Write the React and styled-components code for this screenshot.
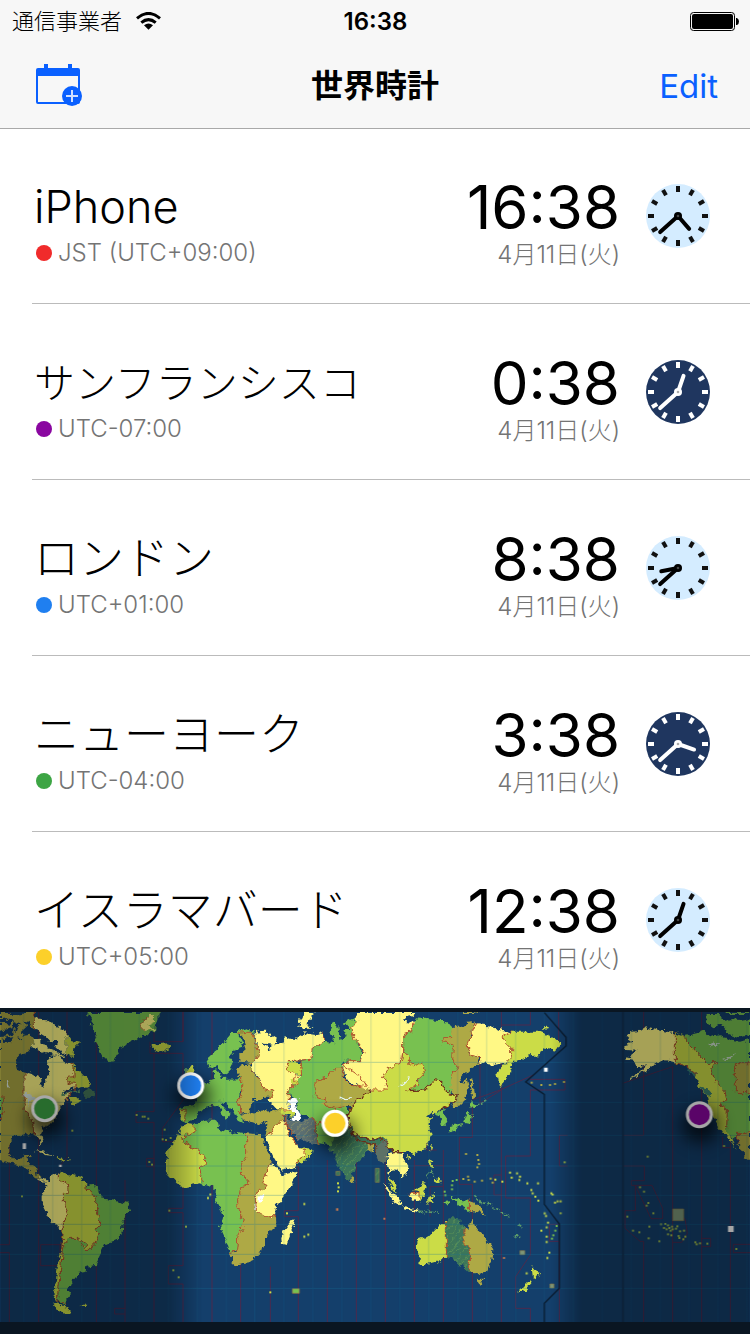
import React from "react";
import styled, { createGlobalStyle } from "styled-components";

const cities = [
  { name: "iPhone", zone: "JST (UTC+09:00)", time: "16:38", dot: "#f02b2b", day: true },
  { name: "サンフランシスコ", zone: "UTC-07:00", time: "0:38", dot: "#8a06a0", day: false, compact: true },
  { name: "ロンドン", zone: "UTC+01:00", time: "8:38", dot: "#1f7ff0", day: true },
  { name: "ニューヨーク", zone: "UTC-04:00", time: "3:38", dot: "#3da544", day: false },
  { name: "イスラマバード", zone: "UTC+05:00", time: "12:38", dot: "#fcd02a", day: true },
];

const LIME = "#cbdc47";
const GREEN = "#78c150";
const YELLOW = "#fff885";
const OLIVE = "#aea945";
const SEA = "#143f6b";
const TEAL = "#3d7659";
const SLATE = "#5d7166";

// each sheet is [x offset, [[fill, outline], ...]]
const sheets = [
  [0, [
    [OLIVE, "M0 36H103V88L92 84 86 66 74 62 78 82 62 96 72 108 92 104 104 118 98 140 84 158 62 164 45 182 50 206 72 215V330L88 345 98 365 101 400 62 408 40 410 28 430 28 460 40 478 70 475 78 462 90 462 80 490 105 498 110 525 130 535 105 532 85 510 60 495 35 493 0 480Z"],
    [YELLOW, "M72 215 95 222 120 232 122 255 132 260 137 240 148 215 140 195 150 170 170 165 185 180 200 188 215 190 222 210 222 230 204 234 204 248 225 250 225 262 205 268 185 285 212 280 200 300 180 318 165 355 150 372 125 385 122 400 130 430 124 436 113 405 101 400 98 365 88 345 72 330Z"],
    [YELLOW, "M103 55 140 58 160 75 190 85 200 100V168L190 162 182 148 166 140 172 128 150 122 138 108 122 98 103 92Z"],
    [YELLOW, "M98 140 104 118 122 116 126 132 146 144 168 152 190 168 192 176 172 166 146 162 128 156 112 150Z"],
    [LIME, "M200 104 212 122 238 128 220 145 218 168 200 162Z"],
    [LIME, "M215 190 240 215 268 245 265 258 235 265 225 260 222 250 204 248 202 232 222 230Z"],
    ["#47795b", "M248 290 262 262 285 275 288 292Z"],
    [LIME, "M202 288 222 292 245 302 216 316Z"],
    ["#e3f2e8", "M65 290 80 278 102 288 104 300 92 300 92 325 85 300ZM18 238 26 242 34 264 26 260Z"],
    [GREEN, "M0 288 10 292 10 330 0 362Z"],
    [SEA, "M0 58 22 54 40 66 30 74 0 70ZM0 92 30 82 44 92 34 106 0 112ZM30 36H70L60 46 40 44ZM8 116 36 112 40 122 16 126ZM44 66 58 72 50 96 40 84ZM52 112 70 118 60 124Z"],
    [YELLOW, "M104 452 125 450 162 468 140 466 120 456ZM112 533 130 536 145 545 165 522 174 526 145 556Z"],
    [LIME, "M168 470 196 475 190 482 172 478ZM200 478 212 478 212 481 200 481Z"],
    [YELLOW, "M170 520 150 530 145 550 125 585 125 612 150 660 188 692 190 660 205 640 190 610 190 580 205 575 202 550 175 542Z"],
    [LIME, "M172 520 185 515 215 525 245 530 262 550 258 565 275 578 290 600 290 640 300 645 298 675 288 690 298 700 275 748 255 748 262 738 232 715 208 715 188 740 178 850 170 910 162 890 170 820 185 740 190 692 190 660 205 640 190 610 190 580 205 575 202 550 175 542Z"],
    [GREEN, "M258 555 275 552 300 572 302 595 345 602 385 612 390 632 368 665 365 700 350 720 315 735 300 765 285 795 262 800 260 815 232 820 230 838 215 840 218 855 205 865 210 885 198 900 195 915 172 908 178 850 188 740 208 715 232 715 262 738 255 748 275 748 298 700 288 690 298 675 300 645 290 640 290 600 275 578 258 565Z"],
    [LIME, "M164 912 195 918 210 940 190 942 165 925ZM162 870 168 874 166 896 160 890ZM242 914 256 914 254 918 244 918Z"],
    [GREEN, "M262 36H480L465 90 430 108 400 120 370 135 350 165 335 188 310 175 295 145 283 125 290 105 275 80 278 60Z"],
    [YELLOW, "M424 94 426 66 442 48 466 48 450 56 466 66 448 74 466 88Z"],
    [LIME, "M453 134 505 130 512 145 485 157 460 150Z"],
  ]],
  [450, [
    [LIME, "M92 380 110 372 135 375 132 392 92 418 150 455 167 478 165 492 148 500 155 530 150 550 98 560 80 550 48 515 45 490 50 455 65 440 80 410Z"],
    [GREEN, "M135 375 165 362 200 362 205 385 240 395 255 405 262 396 287 400V470L272 500 275 520 300 555 275 560 272 580 260 600 262 625 272 628 272 650 280 660 268 685 288 688 265 695 260 750 240 758 228 720 212 685 222 650 210 620 195 600 198 570 185 558 150 552 155 530 148 500 165 492 167 478 150 455 92 418 132 392Z"],
    [OLIVE, "M287 400 330 402 345 430 362 480 355 510 338 540 348 560 318 580 316 600 320 635 345 650 375 650 376 680 345 710 345 730 320 770 295 790 258 796 250 790 240 758 260 755 265 695 288 688 268 685 280 660 272 650 272 628 262 625 260 600 272 580 275 560 300 555 275 520 272 500 287 470Z"],
    [YELLOW, "M362 485 375 500 398 525 440 515 430 545 400 590 375 620 372 650 345 650 320 635 316 600 318 580 348 560 338 540 355 510ZM428 655 433 672 410 735 396 732 394 712 402 690Z"],
    [YELLOW, "M345 412 365 400 375 380 395 360 405 365 410 390 430 420 445 440 465 450 465 465 445 480 440 500 395 512 370 470Z"],
    [LIME, "M450 442 472 438 488 455 470 480 440 490 446 478 465 465 465 450Z"],
    [OLIVE, "M300 345 335 332 380 330 398 335 400 360 375 380 365 400 345 412 350 390 352 365 330 372 300 365Z"],
    [LIME, "M388 330 430 330 428 350 400 345Z"],
    [GREEN, "M520 125 560 130 535 100 550 65 565 75 568 120 590 108 580 90 600 90 582 70 610 56 640 70 620 130 635 150 630 185 580 185 580 205 555 205 530 232 500 238 495 262 500 290 525 300 530 318 560 325 585 320 605 340 605 365 600 400 570 420 555 440 525 432 502 430 498 370 470 345 455 345 440 320 448 300 420 290 415 270 440 250 430 235 455 225 450 182 485 178 490 145Z"],
    [OLIVE, "M495 240 530 232 555 205 580 205 580 235 600 255 645 262 662 270 640 290 610 320 560 325 530 318 515 310 525 300 500 292 496 270Z"],
    [YELLOW, "M315 98 345 95 380 118 375 135 335 130 360 150 366 130 400 130 405 112 430 120 465 100 500 105 520 98 525 120 490 145 485 178 412 182 412 212 455 225 440 250 415 270 415 300 418 332 382 330 355 300 372 275 340 265 325 230 302 210 308 185 325 165Z"],
    [YELLOW, "M497 36 475 60 470 74 488 86 466 86 444 76 455 50 465 36Z"],
    [LIME, "M412 182 450 190 456 222 430 220 412 212ZM420 238 444 236 440 252 428 252Z"],
    [OLIVE, "M268 100 290 97 312 97 325 165 305 188 268 185 268 165 290 145 278 112Z"],
    [OLIVE, "M262 208 285 192 300 192 305 215 325 235 340 265 375 275 368 290 340 290 330 300 310 300 304 322 296 338 272 340 262 300 275 280 275 235 262 228Z"],
    [GREEN, "M172 175 200 150 245 100 285 88 318 95 265 103 280 140 250 150 238 175 250 190 235 220 218 228 205 195 178 203Z"],
    [GREEN, "M165 250 195 240 190 212 202 208 210 237 275 235 278 260 262 300 270 340 280 352 282 370 266 362 248 325 215 302 208 310 242 345 232 362 210 326 190 315 165 320 135 350 110 370 92 362 94 320 135 315 140 290Z"],
    [LIME, "M92 328H105L102 360H92ZM108 205 130 200 130 225 110 225Z"],
    [OLIVE, "M272 345 296 338 302 350 298 368 286 362Z"],
    ["#ffffff", "M415 300 435 292 448 300 438 312 440 325 453 345 445 362 430 358 432 340 420 325ZM326 588 338 584 341 596 330 602 325 598ZM313 612 317 612 322 634 316 628Z"],
  ]],
  [1020, [
    [YELLOW, "M50 36H228L185 62 220 65 215 95 188 105 188 150 180 190 145 205 130 235 140 245 138 270 92 270 60 262 20 240 8 195 30 182 62 182 70 150 45 120 35 80 50 65Z"],
    [GREEN, "M225 55 300 60 330 75 340 85 335 110 308 110 310 128 340 135 338 180 350 200 335 225 332 285 305 260 305 245 280 242 255 270 200 272 230 255 245 225 258 205 248 190 210 195 205 160 188 150 188 105 215 95 220 65Z"],
    [LIME, "M130 235 145 205 180 190 190 152 205 160 210 195 248 190 258 205 235 240 230 255 200 272 255 270 280 242 305 245 305 260 332 285 352 285 345 305 300 330 280 347 275 332 255 350 277 352 262 372 277 400 260 445 225 462 190 455 160 455 145 440 120 412 100 420 70 412 35 400 25 370 25 345 38 310 70 285 92 270 138 270 142 245Z"],
    [OLIVE, "M338 80 365 80 380 68 408 65 398 90 385 110 382 165 410 170 422 190 390 208 365 230 355 245 372 250 380 235 386 260 375 300 355 320 335 322 352 290 330 270 335 225 350 200 338 180 340 135 310 128 308 110 335 110ZM392 238 400 240 405 290 396 296ZM365 36H400L420 42 370 42Z"],
    [YELLOW, "M408 70 440 72 445 82 470 85 510 95 515 120 490 120 515 145 515 170 500 185 465 195 425 190 418 170 385 165 382 130 390 110 395 95Z"],
    [LIME, "M490 108 515 95 560 95 600 95 640 112 664 132 652 150 610 142 600 165 560 170 530 182 510 200 515 215 480 262 472 220 500 185 515 170 515 145 490 120ZM606 82 626 80 626 85 610 86Z"],
    [GREEN, "M293 337 310 330 322 365 310 378 300 360ZM385 335 396 345 392 365 360 378 330 397 326 382 370 372ZM392 303 414 315 405 328 388 325Z"],
    ["url(#hatch)", "M0 395 35 380 40 410 85 430 88 450 50 490 35 535 20 538-5 500-20 460-35 445Z"],
    [TEAL, "M36 402 70 415 105 422 128 410 140 420 135 434 110 440 98 432 60 426Z"],
    [OLIVE, "M82 430 102 432 98 454 86 450ZM34 530 46 542 42 552 35 548Z"],
    [SLATE, "M104 440 135 416 146 442 140 470 130 492 115 485Z"],
    [YELLOW, "M140 470 165 456 188 458 188 475 205 500 200 525 185 532 175 510 155 508 148 530 142 500ZM125 552 150 570 175 590 185 618 165 608ZM187 620 240 630 238 637 190 628ZM205 580 240 580 240 598 220 603Z"],
    [LIME, "M143 530 164 545 174 578 156 566ZM240 575 218 574 232 564 248 546 258 555 252 585 240 605ZM268 480 280 485 278 505 268 500ZM284 535 300 530 302 550 290 548ZM270 440 277 438 272 455ZM200 472 214 470 206 480ZM262 588 288 582 288 588 270 594 282 614 274 612 266 602 262 614Z"],
    [GREEN, "M330 590 362 600 388 602 388 635 365 622 350 608ZM310 605 330 604 330 610 312 610Z"],
    [OLIVE, "M388 602 415 612 420 628 438 645 405 634 388 635Z"],
    [LIME, "M319 668V775L290 785 250 796 238 792 240 770 230 740 235 718 265 708 300 672ZM575 797 590 815 603 820 590 838 578 830ZM572 838 578 845 552 875 538 872Z"],
    ["url(#hatch)", "M319 668 330 655 362 658 360 675 372 682V740H388V818L370 800 350 790 340 778 319 775Z"],
    [OLIVE, "M372 682 388 690 398 650 412 690 435 710 460 745 458 775 438 815 410 820 388 818V740H372ZM410 838 430 836 420 853Z"],
  ]],
  [1620, [
    [YELLOW, "M255 135 282 128 262 112 275 95 300 92 315 82 360 92 406 100V188L375 180 345 190 325 208 290 228 255 243 300 216 322 196 292 202 282 180 258 176 290 152 258 150Z"],
    [LIME, "M406 98 435 108 440 125 460 145 478 165 500 188 528 188 512 210 525 240 555 275 560 300 540 315 562 328 560 385 565 400 590 447 560 410 535 378 510 330 505 290 475 260 470 225 430 192 406 188Z"],
    [GREEN, "M435 108 470 100 490 92 510 112 540 105 570 122 600 125 630 116V470L600 432 592 400 580 420 562 400 560 385 562 328 540 315 560 300 555 275 525 240 512 210 528 188 500 188 478 165 460 145 440 125Z"],
    [GREEN, "M500 45 540 45 552 65 520 82 498 65ZM540 66 575 58 600 60 630 55V105L600 112 565 100ZM540 36H630V42L560 42Z"],
    [OLIVE, "M586 188H630V278H586ZM630 390 615 400 592 400 594 430 615 470 630 480Z"],
    ["#cfe0d0", "M503 132 518 130 524 124 526 132 540 133 524 138 510 142 514 136ZM550 178 566 172 586 164 570 178 558 180Z"],
    ["#3d8270", "M436 200 450 206 472 226 470 234 452 222ZM478 262 500 268 514 284 510 290 490 274Z"],
  ]],
];

const borders = [
  [0, "M103 36V95M72 215V330L88 345 98 365 101 400M215 190 222 210 222 230 202 232 204 248 225 250V262L200 300M0 288 10 292V330L0 362M175 542 202 550 205 575 190 580V610L205 640 190 660V692L185 740M188 740 208 715 232 715 262 738 255 748 275 748 298 700 288 690 298 675 300 645 290 640V600L275 578 258 565V555M188 740 178 850 170 908H195M172 518V535M426 94V66L442 48"],
  [450, "M92 418 132 392V376M92 418 150 455 167 478 165 492 148 500 155 530V550M287 400V470L272 500 275 520 300 555 275 560 272 580 260 600 262 625 272 628V650L280 660 268 685 288 688 265 695 260 750 240 758M362 485 355 510 338 540 348 560 318 580 316 600 320 635 345 650H375M345 412 365 400 375 380 395 360 405 365 410 390 430 420 445 440M450 442 465 450V465L440 490M400 345 410 375 430 400 445 415M262 100 290 97 308 97 325 165 305 188M302 210 325 235 340 265 375 275 355 300M275 235V280L262 300 270 340M520 98 525 120 490 145 485 178 412 182V212L430 220M450 182 455 225 430 235 440 250 415 270V300M495 240 530 232 555 205H580V235L600 255 645 262M495 240 496 290 525 300 530 318 560 325 585 320M475 350 495 365 498 400 505 430M498 370 520 366 560 325M92 328H105V360M388 330H430"],
  [1020, "M50 65 35 80 45 120 70 150 62 182 30 182 8 195 45 222 60 230 92 270H138L140 245 130 235 145 205 180 190 188 150V105L215 95 220 65M188 150 205 160 210 195 248 190 258 205 245 225 230 255 200 272M335 110H308L310 128 340 135 338 180 350 200 335 225M408 70 390 110 382 130 385 165 418 170 425 190M515 95 490 108V120L515 145V170L500 185M319 668V775M372 682V740H388V818M388 602V635M205 580H240V598"],
  [1620, "M406 98V188L430 192 470 225M435 108 440 125 460 145 478 165 500 188H528L512 210 525 240 555 275 560 300 540 315 562 328 560 385M586 188V278H630M586 188H630M630 390 615 400H592V430"],
];

const darkBorders = "M200 272 255 270 280 242 305 245 305 260 332 285 352 285 345 305 300 330M92 270 70 285 38 310 25 345V370L35 400 70 412 100 420 120 412 145 440 160 455H190M36 402 60 426 98 432 110 440 104 460";

const islands = [
  ["#9bb84a", 0, [[217, 392], [410, 345], [428, 350], [434, 350], [445, 356], [494, 389], [488, 418], [498, 420], [512, 414], [448, 486], [456, 494], [508, 632], [558, 680], [520, 811], [536, 832], [66, 589]]],
  [LIME, 450, [[181, 584], [174, 594], [463, 612], [411, 640], [475, 704], [463, 710], [564, 550], [566, 562], [564, 574], [361, 877]]],
  [LIME, 1020, [[510, 518], [515, 533], [531, 520], [540, 530], [538, 540], [562, 550], [594, 550], [574, 570], [578, 580], [586, 590], [595, 602], [634, 580], [638, 584], [645, 608], [653, 604], [662, 604], [614, 640], [618, 648], [624, 668], [604, 692], [620, 682], [620, 710], [620, 726], [628, 758], [622, 774], [560, 820], [487, 545], [466, 539]]],
  [OLIVE, 1020, [[378, 462], [412, 465], [415, 480], [417, 492], [412, 502], [370, 537], [384, 530], [386, 540], [404, 545], [426, 542], [452, 536], [458, 548], [575, 248], [604, 255], [630, 255], [645, 252], [672, 246]]],
  [GREEN, 1020, [[338, 543], [350, 540], [336, 556], [336, 568], [314, 575], [316, 586], [650, 678], [646, 692], [640, 706], [636, 716]]],
  ["#9bb84a", 1620, [[74, 487], [62, 640], [323, 470], [300, 562], [312, 575], [325, 609], [320, 617], [340, 640], [262, 650], [279, 692], [298, 697], [328, 680], [326, 715], [358, 724], [363, 673], [376, 672], [384, 676], [372, 684], [380, 688], [388, 684], [396, 680], [392, 692], [398, 688], [384, 703], [394, 706], [408, 686], [412, 679], [420, 694], [432, 692], [416, 708], [418, 714], [430, 718], [436, 710], [466, 727], [470, 733], [480, 730], [502, 731], [589, 747], [552, 438]]],
];

const zoneLines = [
  "M28 36V734H0M28 966V758H0M116 36V966M201 36V470L181 497M289 36V966M375 540V966M375 925H344V942H375M462 36V125H549V36M549 125M549 160H450V125M462 160V335H408V367H462V966M549 36V125M549 160V300L487 385V425H550M549 425V625H505V638H549V797H505V852H549V966M440 475H462V500H440ZM122 734H180V797H122Z",
  "M636 36V966M722 700V966M811 800V966M853 500H895V632H853V650H895V966M982 480V966M1069 300V966M1156 440V966M1243 480V966M1330 450V966",
  "M1243 540V497H1330M1310 450H1280V370M1417 300 1500 270 1600 225M1417 320V412H1378V553H1417V966M1504 36V966M1330 560H1290V650M1591 36V75H1504M1591 270V468H1517V594H1591V765L1547 830V925H1591V966M1504 270 1440 310V180M1504 525H1482V585H1504M1590 238H1695V270H1590M1676 36V130M1703 406H1678V498H1703M1678 673H1648V724H1678V966",
  "M1931 36V230M1868 250 2018 200V966M1931 230V406H1868M1868 498H1933V542H1894V556H1906V632H1875V685L1920 724H1931V966M1906 556H1956L1988 625V656H1953L1906 556M2018 656H2055L2062 700 2045 727H2018M2105 36V966M2105 715H2132V740H2105M2191 400V966M2191 443H2168V410M2250 733H2200V758H2250",
];

const pins = [
  { x: 134, y: 326, color: "#3da544" },
  { x: 572, y: 257, color: "#1f7ff0" },
  { x: 1005, y: 370, color: "#fcd02a" },
  { x: 2098, y: 344, color: "#8a06a0" },
];

const gridX = Array.from({ length: 26 }, (_, i) => Math.round(71 + i * 86.8));
const gridY = [187, 307, 406, 498, 586, 673, 763, 865];

const CalendarAddIcon = () => (
  <svg width="48" height="44" viewBox="0 0 48 44" aria-hidden="true">
    <path d="M8 0h4v4h20V0h4v4h6a2 2 0 0 1 2 2v32a2 2 0 0 1-2 2H2a2 2 0 0 1-2-2V6a2 2 0 0 1 2-2h6zM2 12v26h40V12z" fill="#0a60ff" fillRule="evenodd" />
    <circle cx="36" cy="32" r="10" fill="#0a60ff" />
    <path d="M36 26v12M30 32h12" stroke="#cfe0ff" strokeWidth="2" />
  </svg>
);

const WifiIcon = () => (
  <svg width="25" height="18" viewBox="0 0 25 18" aria-label="Wi-Fi">
    <path d="M1 6.300Q12.500-3.500 24 6.300M5.300 10.600Q12.500 4.600 19.700 10.600" fill="none" stroke="#000" strokeWidth="3" />
    <path d="M8 13.300Q12.500 9.800 17 13.300L12.500 17.800Z" />
  </svg>
);

const BatteryIcon = () => (
  <svg width="49" height="19" viewBox="0 0 49 19" aria-label="Battery">
    <rect x=".5" y=".5" width="44" height="18" rx="3" fill="none" stroke="#000" />
    <rect x="2" y="2" width="41" height="15" rx="2" />
    <path d="M46 6h1q2 1 2 3.500T47 13h-1z" />
  </svg>
);

const ClockFace = ({ time, day }) => {
  const [hours, minutes] = time.split(":").map(Number);
  const ink = day ? "#111" : "#fff";
  const hand = day ? "#000" : "#fff";
  return (
    <svg width="64" height="64" viewBox="-32 -32 64 64" aria-hidden="true">
      <circle r="32" fill={day ? "#d4ecff" : "#1f365f"} />
      {Array.from({ length: 12 }, (_, i) => (
        <rect key={i} x="-2" y="-30" width="4" height="6" fill={ink} transform={`rotate(${i * 30})`} />
      ))}
      <g stroke={hand} strokeWidth="4" strokeLinecap="round">
        <path d="M0 0V-17" transform={`rotate(${(hours % 12) * 30 + minutes / 2})`} />
        <path d="M0 0V-24" transform={`rotate(${minutes * 6})`} />
      </g>
      <circle r="4" fill={hand} />
      <circle r="1.300" fill={day ? "#444" : "#aaa"} />
    </svg>
  );
};

const WorldMap = () => (
  <MapDrawing viewBox="0 36 2250 930" role="img" aria-label="Time zone map">
    <defs>
      <pattern id="hatch" width="16" height="16" patternUnits="userSpaceOnUse" patternTransform="rotate(40)">
        <rect width="16" height="16" fill={TEAL} />
        <rect width="2" height="16" fill="#5f9656" />
      </pattern>
      <pattern id="hatchGray" width="14" height="14" patternUnits="userSpaceOnUse" patternTransform="rotate(50)">
        <rect width="14" height="14" fill="#5d7072" />
        <rect width="2" height="14" fill="#8a9068" />
      </pattern>
      <filter id="coast" x="0" y="0" width="100%" height="100%" colorInterpolationFilters="sRGB">
        <feTurbulence type="fractalNoise" baseFrequency="0.06" numOctaves="3" seed="4" />
        <feDisplacementMap in="SourceGraphic" scale="22" xChannelSelector="R" yChannelSelector="G" />
      </filter>
      <filter id="soft" x="-100%" y="-100%" width="300%" height="300%">
        <feGaussianBlur stdDeviation="26" />
      </filter>
      <linearGradient id="night">
        <stop offset="0" stopOpacity=".35" />
        <stop offset=".225" stopOpacity=".33" />
        <stop offset=".27" stopOpacity="0" />
        <stop offset=".735" stopOpacity="0" />
        <stop offset=".775" stopOpacity=".35" />
        <stop offset="1" stopOpacity=".35" />
      </linearGradient>
    </defs>
    <rect y="36" width="2250" height="930" fill={SEA} />
    <g fill="none" stroke="#7a1b36" strokeWidth="3" opacity=".55">
      {zoneLines.map((d) => (
        <path key={d} d={d} />
      ))}
    </g>
    <g filter="url(#coast)">
      {sheets.map(([offset, shapes]) => (
        <g key={offset} transform={`translate(${offset})`}>
          {shapes.map(([fill, d]) => (
            <path key={d} d={d} fill={fill} />
          ))}
        </g>
      ))}
      <path d="M850 345 880 360 910 362 925 350 945 362V395L955 430 940 434 920 428 895 415 880 400 860 375Z" fill="url(#hatchGray)" />
      {borders.map(([offset, d]) => (
        <path key={offset} d={d} transform={`translate(${offset})`} fill="none" stroke="#b5532c" strokeWidth="3" />
      ))}
      <path d={darkBorders} transform="translate(1020)" fill="none" stroke="#70301a" strokeWidth="4" />
      <path d="M1196 258Q1224 250 1227 226M1018 296 1050 294" fill="none" stroke="#e6f5ee" strokeWidth="5" />
      <path d="M1420 585 1440 608 1475 612M1480 620 1525 650M1545 705 1558 716M1557 672 1566 684M1260 634 1325 640M1288 510 1305 530M1280 532 1290 514M1430 316 1462 304M185 288 210 274 245 270M555 205 562 215" fill="none" stroke="#5f9c68" strokeWidth="5" strokeDasharray="9 4" />
    </g>
    {islands.map(([fill, offset, dots], i) => (
      <g key={i} fill={fill} transform={`translate(${offset})`}>
        {dots.map(([x, y]) => (
          <rect key={`${x}-${y}`} x={x - 3} y={y - 3} width="6" height="6" />
        ))}
      </g>
    ))}
    <g fill="url(#hatch)" stroke="#8a7a45" strokeWidth="2">
      <path d="M1126 505h12v42h-12zM1008 514h12v12h-12z" />
      <path d="M2018 627h33v35h-33zM1560 752h14v12h-14zM1650 852h12v12h-12z" fill="#7d9678" />
    </g>
    <path d="M877 866h21v14h-21z" fill={GREEN} stroke="#9a6840" strokeWidth="2" />
    <path d="M1008 625h7v7h-7zM1150 653h6v6h-6zM1509 771h6v6h-6z" fill="#bd7650" />
    <g stroke="#18749a" strokeWidth="2" opacity=".3">
      {gridX.map((x) => (
        <path key={x} d={`M${x} 36V966`} />
      ))}
      {gridY.map((y) => (
        <path key={y} d={`M0 ${y}H2250`} strokeWidth="3" />
      ))}
    </g>
    <path d="M68 430h10v17h-10zM177 494h8v7h-8zM1632 203h11v12h-11zM2184 678h17v18h-17z" fill="#fff" />
    <path d="M1633 38 1698 112V138L1577 246 1633 283V613L1678 672V865L1633 910V966" fill="none" stroke="#0a1c30" strokeWidth="4" />
    <path d="M1869 36V966" stroke="#123152" strokeWidth="5" />
    {pins.map((pin) => (
      <g key={pin.color}>
        <ellipse cx={pin.x + 4} cy={pin.y + 32} rx="56" ry="52" opacity=".7" filter="url(#soft)" />
        <circle cx={pin.x} cy={pin.y} r="36" fill={pin.color} stroke="#fff" strokeWidth="9" />
      </g>
    ))}
    <rect y="36" width="2250" height="930" fill="url(#night)" />
  </MapDrawing>
);

const App = () => (
  <Screen>
    <GlobalStyle />
    <Header>
      <StatusBar>
        <Carrier>
          通信事業者
          <WifiIcon />
        </Carrier>
        <StatusTime>16:38</StatusTime>
        <BatteryIcon />
      </StatusBar>
      <NavBar>
        <NavButton type="button" aria-label="Add event">
          <CalendarAddIcon />
        </NavButton>
        <Title>世界時計</Title>
        <NavButton type="button">Edit</NavButton>
      </NavBar>
    </Header>
    <CityList>
      {cities.map((city) => (
        <CityRow key={city.name}>
          <Place>
            <CityName $compact={city.compact}>{city.name}</CityName>
            <Zone>
              <Dot $color={city.dot} />
              {city.zone}
            </Zone>
          </Place>
          <Moment>
            <Time>{city.time}</Time>
            <DateText>4月11日(火)</DateText>
          </Moment>
          <ClockFace time={city.time} day={city.day} />
        </CityRow>
      ))}
    </CityList>
    <MapPanel>
      <WorldMap />
    </MapPanel>
  </Screen>
);

const GlobalStyle = createGlobalStyle`
  * {
    box-sizing: border-box;
  }
  body {
    margin: 0;
    background: #fff;
    color: #000;
    font-family: Inter, "Noto Sans CJK JP", sans-serif;
  }
`;

const Screen = styled.main`
  display: flex;
  flex-direction: column;
`;

const Header = styled.header`
  height: 128px;
  background: #f7f7f7;
  box-shadow: 0 1px 0 #a9a9a9;
`;

const StatusBar = styled.div`
  display: grid;
  grid-template-columns: 1fr auto 1fr;
  align-items: center;
  height: 40px;
  padding: 0 11px 0 12px;
  > svg {
    justify-self: end;
  }
`;

const Carrier = styled.div`
  display: flex;
  align-items: center;
  gap: 14px;
  font-size: 22px;
  font-weight: 300;
  line-height: 40px;
`;

const StatusTime = styled.div`
  padding-top: 2px;
  font-size: 24px;
  font-weight: 600;
  line-height: 40px;
`;

const NavBar = styled.div`
  display: grid;
  grid-template-columns: 1fr auto 1fr;
  align-items: center;
  height: 88px;
  padding: 4px 32px 0;
`;

const NavButton = styled.button`
  justify-self: start;
  padding: 0 0 0 4px;
  border: 0;
  background: none;
  color: #0a60ff;
  font-family: inherit;
  font-size: 33px;
  line-height: 44px;
  cursor: pointer;
  svg {
    display: block;
  }
  &:last-child {
    justify-self: end;
  }
`;

const Title = styled.h1`
  margin: 0;
  font-size: 32px;
  font-weight: 700;
  line-height: 44px;
`;

const CityList = styled.ul`
  margin: 0;
  padding: 0 0 0 32px;
  list-style: none;
`;

const CityRow = styled.li`
  display: grid;
  grid-template-columns: 1fr auto 64px;
  column-gap: 26px;
  align-items: center;
  height: 176px;
  padding-right: 40px;
  border-bottom: 1px solid #bbb;
  &:last-child {
    border-bottom: 0;
  }
`;

const Place = styled.div`
  padding: 18px 0 0 2px;
`;

const CityName = styled.div`
  font-size: ${(props) => (props.$compact ? "41px" : "45px")};
  font-weight: 300;
  line-height: 56px;
  white-space: nowrap;
`;

const Zone = styled.div`
  display: flex;
  align-items: center;
  gap: 6px;
  padding-left: 2px;
  color: #747474;
  font-size: 24px;
  font-weight: 300;
  line-height: 36px;
`;

const Dot = styled.span`
  width: 16px;
  height: 16px;
  border-radius: 50%;
  background: ${(props) => props.$color};
`;

const Moment = styled.div`
  padding-top: 18px;
  text-align: right;
`;

const Time = styled.div`
  font-size: 60px;
  line-height: 60px;
`;

const DateText = styled.div`
  color: #747474;
  font-size: 24px;
  font-weight: 300;
  line-height: 36px;
`;

const MapPanel = styled.section`
  padding: 4px 0 12px;
  background: #0a1622;
`;

const MapDrawing = styled.svg`
  display: block;
  width: 100%;
  height: auto;
`;

export default App;
